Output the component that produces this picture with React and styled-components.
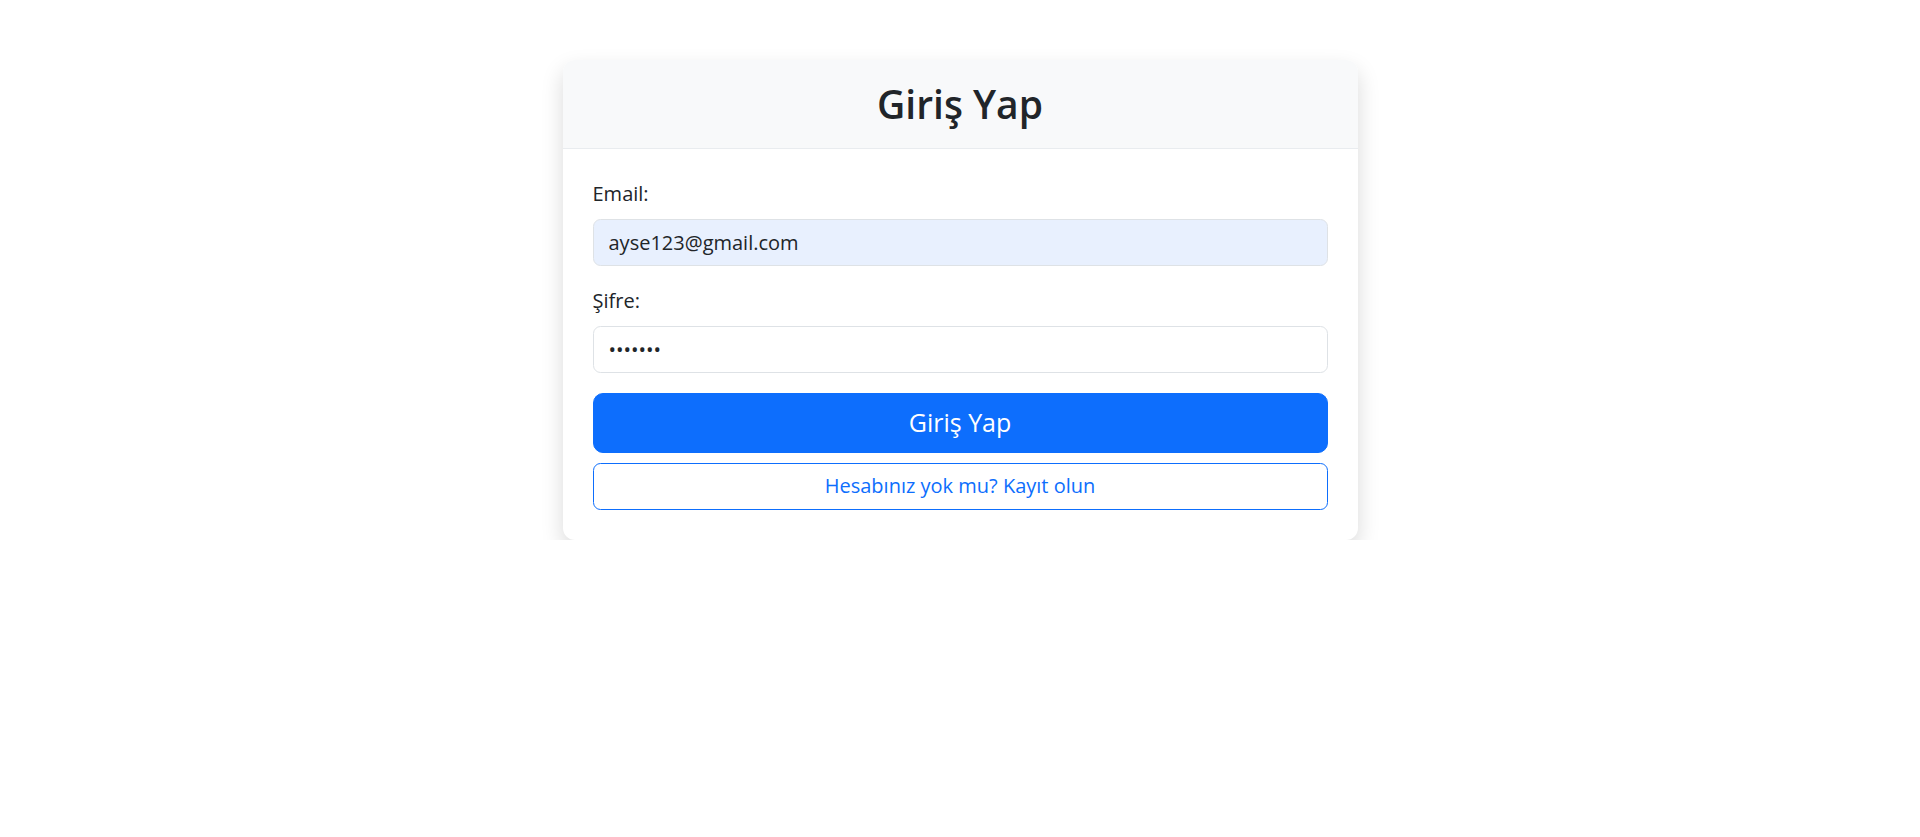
import { useState } from "react";
import styled, { createGlobalStyle } from "styled-components";

const GlobalStyle = createGlobalStyle`
  * {
    box-sizing: border-box;
  }
  body {
    margin: 0;
    background-color: #fff;
    color: #212529;
    font-family: "Open Sans", "Noto Sans", sans-serif;
    font-size: 20px;
    line-height: 1.5;
  }
`;

export default function App() {
  const [formState, setFormState] = useState({
    email: "ayse123@gmail.com",
    password: "1234567",
  });
  const { email, password } = formState;

  const onChangeHandler = (e) => {
    const { name, value } = e.target;
    setFormState((prev) => ({ ...prev, [name]: value }));
  };

  const onSubmitHandler = (e) => {
    e.preventDefault();
  };

  return (
    <Page>
      <GlobalStyle />
      <Card>
        <CardHeader>
          <Title>Giriş Yap</Title>
        </CardHeader>
        <CardBody>
          <form onSubmit={onSubmitHandler}>
            <Field>
              <Label htmlFor="email">Email:</Label>
              <Input
                id="email"
                name="email"
                type="email"
                value={email}
                onChange={onChangeHandler}
                $autofill
              />
            </Field>
            <Field>
              <Label htmlFor="password">Şifre:</Label>
              <Input
                id="password"
                name="password"
                type="password"
                value={password}
                onChange={onChangeHandler}
              />
            </Field>
            <Button type="submit" $size="large">
              Giriş Yap
            </Button>
            <Button type="button" $variant="outline">
              Hesabınız yok mu? Kayıt olun
            </Button>
          </form>
        </CardBody>
      </Card>
    </Page>
  );
}

const Page = styled.div`
  display: flex;
  justify-content: center;
  padding-top: 60px;
`;

const Card = styled.div`
  width: 795px;
  background-color: #fff;
  border-radius: 12px;
  overflow: hidden;
  box-shadow: 0 10px 22px rgba(0, 0, 0, 0.15);
`;

const CardHeader = styled.div`
  background-color: #f8f9fa;
  border-bottom: 1px solid #e9ecef;
  padding: 20px 30px;
  text-align: center;
`;

const Title = styled.h2`
  margin: 0;
  font-size: 39px;
  font-weight: 600;
  line-height: 48px;
  color: #212529;
`;

const CardBody = styled.div`
  padding: 30px;
`;

const Field = styled.div`
  margin-bottom: 20px;
`;

const Label = styled.label`
  display: block;
  margin-bottom: 10px;
  color: #212529;
`;

const Input = styled.input`
  display: block;
  width: 100%;
  height: 47px;
  padding: 7.5px 15px;
  font-family: inherit;
  font-size: 20px;
  line-height: 1.5;
  color: #212529;
  background-color: ${({ $autofill }) => ($autofill ? "#e8f0fe" : "#fff")};
  border: 1px solid #dee2e6;
  border-radius: 7.5px;
  outline: none;
`;

const Button = styled.button`
  display: block;
  width: 100%;
  font-family: inherit;
  cursor: pointer;
  border: 1px solid #0d6efd;
  ${({ $size }) =>
    $size === "large"
      ? `
    padding: 10px 20px;
    font-size: 25px;
    line-height: 1.5;
    border-radius: 10px;
  `
      : `
    padding: 7.5px 15px;
    font-size: 20px;
    line-height: 1.5;
    border-radius: 7.5px;
    margin-top: 10px;
  `}
  color: ${({ $variant }) => ($variant === "outline" ? "#0d6efd" : "#fff")};
  background-color: ${({ $variant }) =>
    $variant === "outline" ? "#fff" : "#0d6efd"};
`;
